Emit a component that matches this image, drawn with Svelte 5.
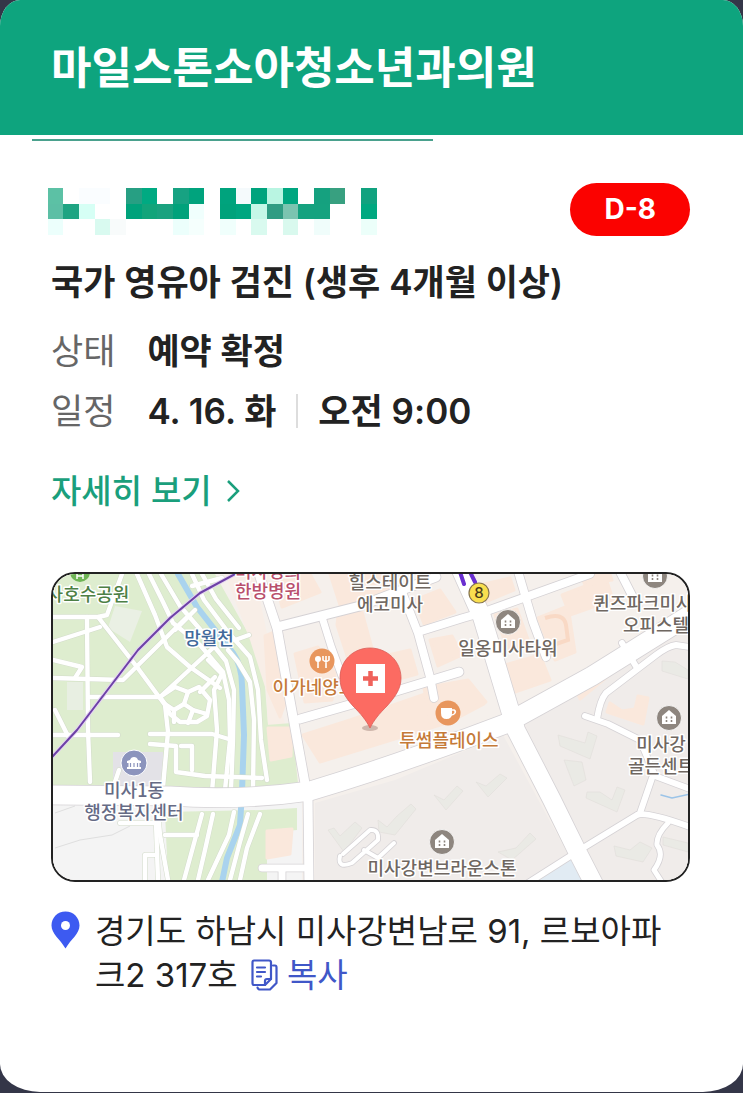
<script>
  let copied = $state(false)

  const address = '경기도 하남시 미사강변남로 91, 르보아파크2 317호'

  function copyAddress() {
    navigator.clipboard?.writeText(address)
    copied = true
  }

  // masked patient name: [column, row, colour]
  const mask = [
    [0, 0, '#5cc1a5'], [2, 0, '#fafdff'], [3, 0, '#fafdff'], [5, 0, '#279f83'], [6, 0, '#00aa82'],
    [8, 0, '#17a282'], [9, 0, '#00a37d'], [11, 0, '#00a37d'], [12, 0, '#f5fafc'], [13, 0, '#00a37d'],
    [14, 0, '#b9f5e2'], [15, 0, '#00a680'], [17, 0, '#15a17f'], [18, 0, '#38a080'], [20, 0, '#11a27f'],
    [0, 1, '#5cbfa5'], [1, 1, '#1ea482'], [2, 1, '#d6fff5'], [5, 1, '#00a27b'], [6, 1, '#12a47a'],
    [7, 1, '#1aa27f'], [8, 1, '#00a27b'], [9, 1, '#f0fffd'], [11, 1, '#00a27b'], [12, 1, '#00a680'],
    [13, 1, '#c5f7e7'], [14, 1, '#309c83'], [15, 1, '#7bc4b0'], [16, 1, '#15a27f'], [17, 1, '#15a27f'],
    [20, 1, '#00a880'], [0, 2, '#ecfffc'], [3, 2, '#d9faf0'], [4, 2, '#f8fbfb'], [8, 2, '#ecfffc'],
    [9, 2, '#f5fffd'], [11, 2, '#f0fffc'], [13, 2, '#d9faef'], [15, 2, '#d9f9ee'], [17, 2, '#f0fdfb'],
    [20, 2, '#ecfffa'],
  ]

  const paths = [
    'M53 617H98L107 615L122 574', 'M87 617L88 730L90 782', 'M53 642L100 627',
    'M98 617L137 667L165 705L168 732L163 787', 'M53 660L82 667L75 678', 'M53 678L123 680L186 618',
    'M90 697H160L213 648', 'M137 574L155 615L167 647L190 667L220 688', 'M149 574L163 602L173 623L200 645L223 672L229 700L230 740L225 790',
    'M161 574L180 606L205 635L226 661L234 690L233 740L231 790', 'M175 630L195 610', 'M192 574L204 600L228 632L250 657L258 690L261 740L267 780',
    'M202 574L216 599L239 628', 'M235 640L249 635', 'M192 586L222 578', 'M215 677L200 692',
    'M228 650L238 662L250 682L254 720L253 790', 'M208 660L222 674L214 690L217 730L212 792',
    'M53 735H118', 'M150 734H212L232 740', 'M150 744L176 746V772L205 776L262 778', 'M181 746H192V770', 'M55 710L68 736',
    'M160 697L175 687L188 692L199 687L210 700L207 716L197 722L180 722L170 714L165 704L160 697',
    'M188 692L184 704L174 710', 'M184 704L193 710L207 714', 'M193 710L188 723', 'M165 704L174 710V722',
    'M202 814L184 880', 'M213 814L205 850L198 880', 'M234 812L229 835L208 880', 'M248 814L240 842L230 880',
    'M260 814L247 848L240 880', 'M165 835H197', 'M158 812L160 835L168 880', 'M119 770L115 782', 'M120 823H156L158 880', 'M145 855V880M145 855H154',
  ]

  const roads = [
    { d: 'M53 795L170 796Q240 801 310 791Q400 764 505 724L592 676L688 616', w: 19 },
    { d: 'M460 568L482 617L516 730L552 800L578 853L596 888', w: 18 },
    { d: 'M257 568L277 628L293 717L308 800L309 888', w: 9 },
    { d: 'M277 627L360 606L436 577', w: 9 },
    { d: 'M322 617L331 646L342 676', w: 7 },
    { d: 'M402 592L418 633L430 677L434 698', w: 8 },
    { d: 'M418 632L463 618L484 612L590 574', w: 8 },
    { d: 'M300 719L370 699L459 672', w: 9 },
    { d: 'M517 568L533 622L546 657', w: 8 },
    { d: 'M618 568L636 603', w: 8 },
    { d: 'M622 643L637 668', w: 6 },
    { d: 'M690 647L676 645Q668 646 656 655L606 693Q600 700 597 719', w: 6 },
    { d: 'M585 716L608 724L640 740L655 776L690 789', w: 6 },
    { d: 'M528 883L583 848L637 815Q645 811 690 827', w: 6 },
    { d: 'M652 778L640 813', w: 6 },
    { d: 'M668 823Q656 835 657 845Q665 855 654 870L663 884', w: 5 },
    { d: 'M262 868H303M282 868V884', w: 7 },
    { d: 'M343 854L370 830Q379 829 378 840L352 863Q337 869 340 856M364 850L378 858L394 843', w: 4 },
  ]

  const peach = [
    '275,580 310,574 320,592 282,607', '330,574 390,574 398,590 340,605', '338,616 362,612 373,652 350,665 337,625',
    '265,636 279,630 290,690 280,717 268,690', '295,654 318,647 335,673 332,700 305,702', '388,655 410,650 417,674 395,680',
    '430,640 452,636 462,655 438,666', '415,600 440,590 455,612 424,624', '303,735 350,720 460,682 484,704 450,722 320,762',
    '424,688 468,680 486,702 430,722', '495,615 517,609 530,645 508,650', '505,665 540,655 550,680 515,692',
    '480,585 510,578 514,590 485,602', '538,618 568,606 575,652 555,660', '562,595 606,578 613,600 570,615',
    '575,688 622,652 618,668 580,699', '610,703 622,711 635,709 638,696 648,698 643,724 607,712', '268,728 292,728 291,756 271,760',
    '267,831 292,829 290,854 267,858', '580,574 610,574 612,580 585,585',
  ]

  const houses = [
    '328,830 334,828 340,836 355,822 362,828 344,852', '378,820 387,827 397,816 411,804 416,809 395,835 379,832',
    '434,795 444,800 457,786 463,791 446,810', '476,782 486,786 500,774 507,778 488,797', '558,735 575,740 585,743 588,732 597,736 590,759 560,746',
    '587,792 600,792 612,800 617,787 625,790 617,812 586,798', '662,661 675,662 688,670 688,679 662,671', '614,846 630,850 640,842 652,848 643,862 616,856',
    '663,837 688,843 688,852 663,845', '498,852 516,848 530,833 536,839 512,860', '564,760 582,762 586,780 574,786',
  ]

  const labels = [
    { x: 88, y: 601, text: '사호수공원', kind: 'park' },
    { x: 268, y: 578, text: '미사경희', kind: 'clinic' },
    { x: 268, y: 598, text: '한방병원', kind: 'clinic' },
    { x: 209, y: 645, text: '망월천', kind: 'river' },
    { x: 390, y: 589, text: '힐스테이트', kind: 'place' },
    { x: 390, y: 611, text: '에코미사', kind: 'place' },
    { x: 508, y: 655, text: '일옹미사타워', kind: 'place' },
    { x: 643, y: 610, text: '퀸즈파크미사', kind: 'place' },
    { x: 656, y: 632, text: '오피스텔', kind: 'place' },
    { x: 661, y: 751, text: '미사강', kind: 'place' },
    { x: 661, y: 773, text: '골든센트', kind: 'place' },
    { x: 442, y: 875, text: '미사강변브라운스톤', kind: 'place' },
    { x: 134, y: 797, text: '미사1동', kind: 'public' },
    { x: 134, y: 819, text: '행정복지센터', kind: 'public' },
    { x: 314, y: 694, text: '이가네양꼬', kind: 'food' },
    { x: 449, y: 747, text: '투썸플레이스', kind: 'food' },
  ]

  const buildings = [[508, 622], [655, 576], [669, 718], [442, 842]]
</script>

<main class="card">
  <header class="card-header">
    <h1>마일스톤소아청소년과의원</h1>
  </header>
  <div class="header-line"></div>

  <div class="card-body">
    <div class="name-row">
      <svg class="name-mask" viewBox="0 0 21 3" shape-rendering="crispEdges" aria-hidden="true">
        {#each mask as [col, row, fill]}
          <rect x={col} y={row} width="1" height="1" {fill} />
        {/each}
      </svg>
      <span class="badge">D-8</span>
    </div>

    <h2>국가 영유아 검진 (생후 4개월 이상)</h2>

    <dl class="info">
      <div class="info-row">
        <dt>상태</dt>
        <dd>예약 확정</dd>
      </div>
      <div class="info-row">
        <dt>일정</dt>
        <dd>4. 16. 화<span class="divider"></span>오전 9:00</dd>
      </div>
    </dl>

    <a class="detail-link" href="#detail">
      자세히 보기
      <svg viewBox="0 0 14 24" fill="none" stroke="currentColor" stroke-width="2.5">
        <path d="M2 2l10 10L2 22" />
      </svg>
    </a>

    <div class="map">
      <svg viewBox="53 574 635 306" preserveAspectRatio="xMidYMid slice" role="img" aria-label="병원 위치 지도">
        <rect x="53" y="574" width="635" height="306" fill="#f5f0ec" />
        <path d="M53 574H215L263 660L268 725L302 790L170 800H53Z" fill="#deedcf" />
        <path d="M225 574H255L298 790L272 792L266 690L250 640Z" fill="#f8eee7" />
        <path d="M266 725L292 723L298 784L270 790Z" fill="#deedcf" />
        <path d="M53 798H302V880H53Z" fill="#f4f4f4" />
        <path d="M165 812L262 810L297 808V830L267 833V880H168Z" fill="#deedcf" />
        <path d="M113 752H163V787H113Z" fill="#e3e2e7" />
        <path d="M115 606L142 611L130 642L108 628Z" fill="#eaf0e4" />
        <path d="M67 682H83V710H67Z" fill="#e8efe2" />
        <path d="M315 880V803L395 780L503 735L582 880Z" fill="#f0ecea" />
        <path d="M525 725L622 662L688 627V880H600Z" fill="#f0ecea" />
        <path d="M533 882L574 857L588 882Z" fill="#e1ebf3" />
        <path d="M55 813L75 806M55 848L80 840L112 835L130 826" fill="none" stroke="#dfdfdf" />

        {#each peach as points}
          <polygon {points} fill="#fae8dc" stroke="#fae8dc" stroke-width="3" stroke-linejoin="round" />
        {/each}
        {#each houses as points}
          <polygon {points} fill="#eaeae5" stroke="#e0deda" stroke-width="0.6" />
        {/each}
        <path d="M545 618Q564 612 566 625L568 640L556 644" fill="none" stroke="#f9d9c5" stroke-width="4" />

        <g class="road">
          <path d="M178 574L197 607L233 653Q242 666 242 685L244 735L242 792L240 825L227 858L222 882" stroke="#a9d3ee" stroke-width="6" />
          {#each paths as d}
            <path {d} stroke="#d3dccb" stroke-width="5.4" />
          {/each}
          {#each paths as d}
            <path {d} stroke="#fff" stroke-width="4.4" />
          {/each}
          {#each roads as road}
            <path d={road.d} stroke="#d5d2d5" stroke-width={road.w + 1.6} />
          {/each}
          {#each roads as road}
            <path d={road.d} stroke="#fff" stroke-width={road.w} />
          {/each}
          <path d="M661 795L672 798L690 794" stroke="#9cc4e8" stroke-width="1.5" />
          <path d="M235 574L200 593L170 618L138 650L77 730L52 757" stroke="#e3d3f0" stroke-width="4" />
          <path d="M235 574L200 593L170 618L138 650L77 730L52 757" stroke="#6d41a6" stroke-width="2" />
          <path d="M460 572L464 584M470 572L475 582" stroke="#6a2fd0" stroke-width="4" />
        </g>

        <circle cx="80" cy="572" r="10" fill="#6fb556" />
        <path d="M77 574V579M83 574V579M77 576H83" stroke="#fff" stroke-width="1.5" />

        {#each labels as label}
          <text class="label {label.kind}" x={label.x} y={label.y}>{label.text}</text>
        {/each}

        <circle cx="479" cy="593" r="10" fill="#f9df4f" stroke="#87754e" stroke-width="1.2" />
        <text class="exit" x="479" y="598">8</text>

        {#each buildings as [x, y]}
          <g transform="translate({x} {y})">
            <circle r="12.5" fill="#8e867f" stroke="#fff" stroke-width="0.8" />
            <path d="M0-8L7-2V6H-7V-2Z" fill="#fff" />
            <path d="M-2.5-1.5V.5M2.5-1.5V.5M-2.5 2V4M2.5 2V4" stroke="#8e867f" stroke-width="1.6" />
          </g>
        {/each}

        <g transform="translate(134 763)">
          <circle r="13" fill="#8c94bd" stroke="#fff" />
          <path d="M-7-2L-4-3Q-3-6 0-6Q3-6 4-3L7-2V0H5.500V4H7V6H-7V4H-5.500V0H-7Z" fill="#fff" />
          <path d="M-3.500 0V4M0 0V4M3.500 0V4" stroke="#8c94bd" stroke-width="1.2" />
        </g>

        <g transform="translate(322 661)">
          <circle r="12.500" fill="#e8965d" />
          <circle cx="-4" cy="-2" r="3" fill="#fff" />
          <path d="M-4-1V7M4-1V7M1-5V-1Q4 2 7-1V-5M4-5V0" fill="none" stroke="#fff" stroke-width="1.6" />
        </g>

        <g transform="translate(448 713)">
          <circle r="12.500" fill="#e8965d" />
          <path d="M-7-5H4V0Q4 6-1.500 6Q-7 6-7 0Z" fill="#fff" />
          <path d="M4-3H6Q8-2 7 0Q6 2 3 2" fill="none" stroke="#fff" stroke-width="1.6" />
        </g>

        <ellipse cx="370" cy="728" rx="8" ry="3" fill="#9a7a70" opacity="0.45" />
        <path d="M370 648C353 648 340 661 340 678C340 689 345 697 353 706C361 714 366 720 370 728C374 720 379 714 387 706C395 697 401 689 401 678C401 661 387 648 370 648Z" fill="#fc6b62" stroke="#d95e58" stroke-width="0.8" />
        <rect x="356" y="664" width="29" height="29" fill="#fff" />
        <path d="M370.500 671V686M363 678.500H378" stroke="#f0625b" stroke-width="4.500" />
      </svg>
    </div>

    <div class="address">
      <svg class="pin" viewBox="0 0 29 38">
        <path d="M14.500 0.500C6.500 0.500 0.500 6.700 0.500 14.500C0.500 23 9 28 14.500 37.500C20 28 28.500 23 28.500 14.500C28.500 6.700 22.500 0.500 14.500 0.500Z" fill="#3d5af1" />
        <circle cx="14.500" cy="14.500" r="4.500" fill="#fff" />
      </svg>
      <p>
        {address}
        <button class="copy-btn" onclick={copyAddress} aria-pressed={copied}>
          <svg viewBox="0 0 27 32" fill="none" stroke="currentColor" stroke-width="2.200" stroke-linejoin="round" stroke-linecap="round">
            <path d="M3 1.500H18Q20 1.500 20 3.500V20L14 26H3Q1.500 26 1.500 24V3.500Q1.500 1.500 3 1.500Z" />
            <path d="M20 20H16Q14 20 14 22V26" />
            <path d="M6 8.500H14M6 13H14M6 17.500H10" />
            <path d="M22 6.500H24Q25.500 6.500 25.500 8.500V24L19 30.500H9Q7 30.500 6.500 28.500" />
          </svg>복사
        </button>
      </p>
    </div>
  </div>
</main>

<style>
  :global(body) {
    background: #343648;
  }

  .card {
    box-sizing: border-box;
    min-height: calc(100vh - 1px);
    margin-bottom: 1px;
    background: #fff;
    border-radius: 20px 20px 40px 40px / 26px 26px 28px 28px;
    overflow: hidden;
    color: #222;
    font-family: Inter, 'Noto Sans CJK KR', sans-serif;
  }

  .card-header {
    display: flex;
    align-items: center;
    height: 135px;
    padding: 0 51px;
    box-sizing: border-box;
    background: #0ea47e;
  }

  h1,
  h2,
  p,
  dl,
  dd {
    margin: 0;
  }

  h1 {
    color: #fff;
    font-size: 44px;
    font-weight: 600;
    line-height: 56px;
  }

  .header-line {
    width: 54%;
    height: 2px;
    margin: 4px 0 0 32px;
    background: #4aa18d;
  }

  .card-body {
    padding: 42px 53px 60px 51px;
  }

  .name-row {
    display: flex;
    align-items: center;
    justify-content: space-between;
  }

  .name-mask {
    width: 330px;
    height: 47px;
    margin: 3px 0 0 -4px;
  }

  .badge {
    padding: 0 34px;
    border-radius: 27px;
    background: #fb0200;
    color: #fff;
    font-size: 28px;
    font-weight: 700;
    line-height: 53px;
  }

  h2 {
    margin-top: 18px;
    font-size: 35px;
    font-weight: 600;
    line-height: 56px;
  }

  .info {
    margin-top: 11px;
  }

  .info-row {
    display: flex;
    gap: 32px;
    font-size: 35px;
    line-height: 60px;
  }

  dt {
    color: #666;
  }

  dd {
    display: flex;
    align-items: center;
    font-weight: 600;
  }

  .divider {
    width: 2px;
    height: 34px;
    margin: 0 20px;
    background: #ddd;
  }

  .detail-link {
    display: flex;
    align-items: center;
    gap: 14px;
    width: fit-content;
    margin-top: 22px;
    color: #1a9f7c;
    font-size: 33px;
    font-weight: 500;
    line-height: 56px;
    text-decoration: none;
  }

  .detail-link svg {
    width: 14px;
    height: 24px;
  }

  .map {
    margin-top: 53px;
    border: 2px solid #222;
    border-radius: 24px;
    overflow: hidden;
  }

  .map svg {
    display: block;
    width: 100%;
    height: 306px;
  }

  .road {
    fill: none;
    stroke-linejoin: round;
    stroke-linecap: round;
  }

  .label {
    font-family: 'Noto Sans CJK KR', sans-serif;
    font-size: 18px;
    font-weight: 500;
    text-anchor: middle;
    paint-order: stroke;
    stroke: #fff;
    stroke-width: 3px;
    stroke-linejoin: round;
  }

  .place {
    fill: #6f6761;
  }

  .park {
    fill: #4d8045;
  }

  .clinic {
    fill: #b9506c;
  }

  .river {
    fill: #41699b;
  }

  .public {
    fill: #666b85;
  }

  .food {
    fill: #c57a38;
  }

  .exit {
    fill: #4a3c1c;
    font-size: 15px;
    font-weight: 500;
    text-anchor: middle;
  }

  .address {
    display: flex;
    align-items: flex-start;
    gap: 15px;
    margin-top: 27px;
    font-size: 33px;
    line-height: 44px;
  }

  .pin {
    flex: none;
    width: 29px;
    height: 38px;
    margin-top: 2px;
  }

  .address p {
    padding-right: 20px;
  }

  .copy-btn {
    margin-left: 4px;
    padding: 0;
    border: none;
    background: none;
    color: #4057c8;
    font: inherit;
    line-height: 40px;
    cursor: pointer;
  }

  .copy-btn svg {
    width: 27px;
    height: 32px;
    margin-right: 9px;
    vertical-align: -4px;
  }
</style>
